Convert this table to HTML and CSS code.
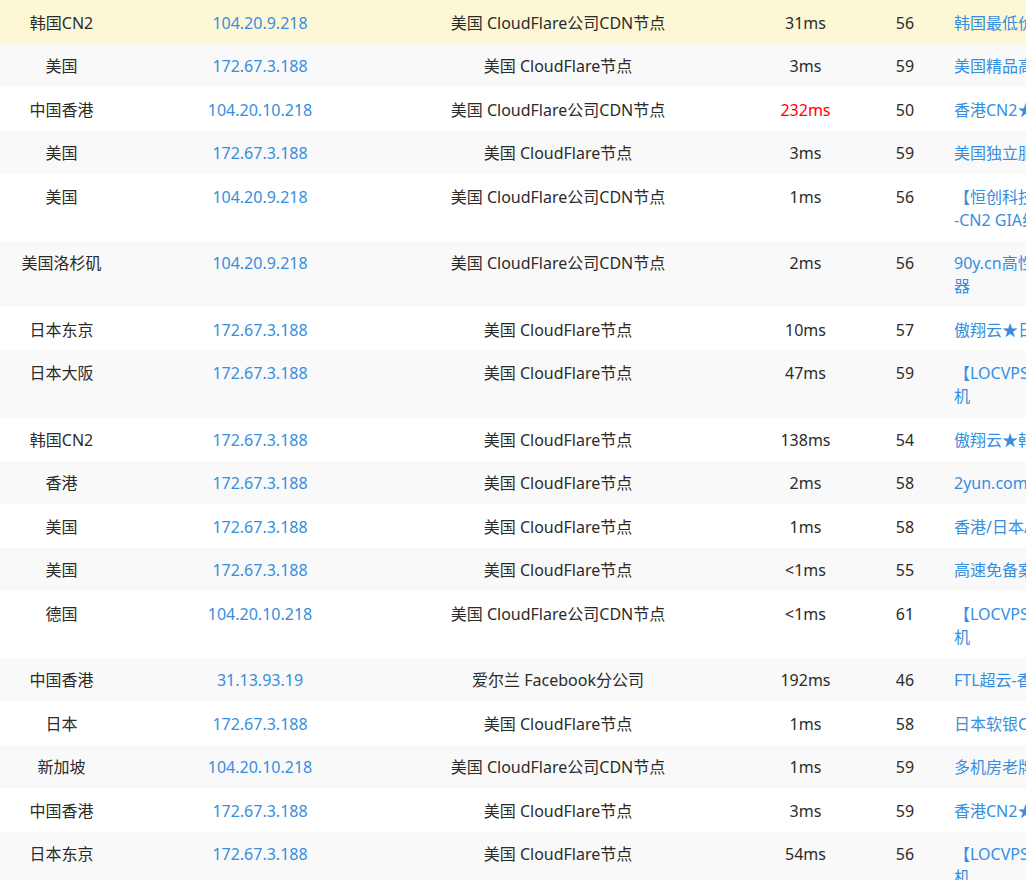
FILE: index.html
```html
<!DOCTYPE html>
<html lang="zh-CN">
<head>
<meta charset="utf-8">
<title>测速结果</title>
<link rel="stylesheet" href="styles.css">
</head>
<body>
<table class="result">
  <colgroup>
    <col class="c-node">
    <col class="c-ip">
    <col class="c-loc">
    <col class="c-time">
    <col class="c-ttl">
    <col class="c-ad">
  </colgroup>
  <tbody>
    <tr class="hl"><td>韩国CN2</td><td class="ip">104.20.9.218</td><td>美国 CloudFlare公司CDN节点</td><td>31ms</td><td>56</td><td class="ad">韩国最低价CN2服务器</td></tr>
    <tr><td>美国</td><td class="ip">172.67.3.188</td><td>美国 CloudFlare节点</td><td>3ms</td><td>59</td><td class="ad">美国精品高防服务器</td></tr>
    <tr><td>中国香港</td><td class="ip">104.20.10.218</td><td>美国 CloudFlare公司CDN节点</td><td class="slow">232ms</td><td>50</td><td class="ad">香港CN2★高速稳定</td></tr>
    <tr><td>美国</td><td class="ip">172.67.3.188</td><td>美国 CloudFlare节点</td><td>3ms</td><td>59</td><td class="ad">美国独立服务器租用</td></tr>
    <tr><td>美国</td><td class="ip">104.20.9.218</td><td>美国 CloudFlare公司CDN节点</td><td>1ms</td><td>56</td><td class="ad">【恒创科技】香港服务器<br>-CN2 GIA线路</td></tr>
    <tr><td>美国洛杉矶</td><td class="ip">104.20.9.218</td><td>美国 CloudFlare公司CDN节点</td><td>2ms</td><td>56</td><td class="ad">90y.cn高性价比香港服务<br>器</td></tr>
    <tr><td>日本东京</td><td class="ip">172.67.3.188</td><td>美国 CloudFlare节点</td><td>10ms</td><td>57</td><td class="ad">傲翔云★日本CN2云主机</td></tr>
    <tr><td>日本大阪</td><td class="ip">172.67.3.188</td><td>美国 CloudFlare节点</td><td>47ms</td><td>59</td><td class="ad">【LOCVPS】日本大阪VPS主<br>机</td></tr>
    <tr><td>韩国CN2</td><td class="ip">172.67.3.188</td><td>美国 CloudFlare节点</td><td>138ms</td><td>54</td><td class="ad">傲翔云★韩国CN2云主机</td></tr>
    <tr><td>香港</td><td class="ip">172.67.3.188</td><td>美国 CloudFlare节点</td><td>2ms</td><td>58</td><td class="ad">2yun.com香港服务器</td></tr>
    <tr><td>美国</td><td class="ip">172.67.3.188</td><td>美国 CloudFlare节点</td><td>1ms</td><td>58</td><td class="ad">香港/日本/美国服务器</td></tr>
    <tr><td>美国</td><td class="ip">172.67.3.188</td><td>美国 CloudFlare节点</td><td>&lt;1ms</td><td>55</td><td class="ad">高速免备案云主机</td></tr>
    <tr><td>德国</td><td class="ip">104.20.10.218</td><td>美国 CloudFlare公司CDN节点</td><td>&lt;1ms</td><td>61</td><td class="ad">【LOCVPS】德国VPS主<br>机</td></tr>
    <tr><td>中国香港</td><td class="ip">31.13.93.19</td><td>爱尔兰 Facebook分公司</td><td>192ms</td><td>46</td><td class="ad">FTL超云-香港服务器</td></tr>
    <tr><td>日本</td><td class="ip">172.67.3.188</td><td>美国 CloudFlare节点</td><td>1ms</td><td>58</td><td class="ad">日本软银CN2服务器</td></tr>
    <tr><td>新加坡</td><td class="ip">104.20.10.218</td><td>美国 CloudFlare公司CDN节点</td><td>1ms</td><td>59</td><td class="ad">多机房老牌IDC服务商</td></tr>
    <tr><td>中国香港</td><td class="ip">172.67.3.188</td><td>美国 CloudFlare节点</td><td>3ms</td><td>59</td><td class="ad">香港CN2★高速稳定</td></tr>
    <tr><td>日本东京</td><td class="ip">172.67.3.188</td><td>美国 CloudFlare节点</td><td>54ms</td><td>56</td><td class="ad">【LOCVPS】日本东京VPS主<br>机</td></tr>
  </tbody>
</table>
</body>
</html>
```

FILE: styles.css
```css
html {
  overflow: hidden;
  background: #fff;
}

body {
  margin: 0;
  font-family: "Noto Sans", "Noto Sans CJK SC", sans-serif;
  font-size: 16px;
  line-height: 23px;
  color: #2b2b2b;
}

.result {
  border-collapse: collapse;
  table-layout: fixed;
  width: 1300px;
}

.c-node { width: 123px; }
.c-ip { width: 274px; }
.c-loc { width: 322px; }
.c-time { width: 173px; }
.c-ttl { width: 26px; }
.c-ad { width: 382px; }

.result td {
  padding: 11.5px 0 9px;
  text-align: center;
  vertical-align: top;
  white-space: nowrap;
}

.result tr:nth-child(even) td {
  background: #f9f9f9;
}

.result tr.hl td {
  background: #fcf8d6;
}

.result td.ip,
.result td.ad {
  color: #368ee0;
}

.result td.ad {
  text-align: left;
  padding-left: 36px;
}

.result td.slow {
  color: #ff0000;
}
```
